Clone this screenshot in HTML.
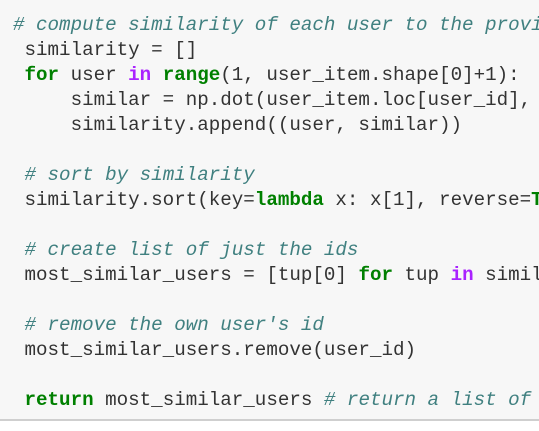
<!DOCTYPE html>
<html><head><style>
html,body{margin:0;padding:0;background:#fff;width:539px;height:431px;overflow:hidden}
.box{position:absolute;left:0;top:0;width:539px;height:419px;background:#f7f7f7;border-bottom:2px solid #cfcfcf;overflow:hidden}
pre{position:absolute;left:13px;top:13px;margin:0;font-family:"Liberation Mono","DejaVu Sans Mono",monospace;font-size:19.2px;line-height:25px;color:#333;white-space:pre}
.c{color:#408080;font-style:italic}
.k{color:#008000;font-weight:bold}
.o{color:#aa22ff;font-weight:bold}
</style></head><body>
<div class="box">
<pre><span class="c"># compute similarity of each user to the provi</span>
 similarity = []
 <span class="k">for</span> user <span class="o">in</span> <span class="k">range</span>(1, user_item.shape[0]+1):
     similar = np.dot(user_item.loc[user_id], 
     similarity.append((user, similar))

 <span class="c"># sort by similarity</span>
 similarity.sort(key=<span class="k">lambda</span> x: x[1], reverse=<span class="k">T</span>

 <span class="c"># create list of just the ids</span>
 most_similar_users = [tup[0] <span class="k">for</span> tup <span class="o">in</span> simil

 <span class="c"># remove the own user's id</span>
 most_similar_users.remove(user_id)

 <span class="k">return</span> most_similar_users <span class="c"># return a list of</span></pre>
</div>
</body></html>
